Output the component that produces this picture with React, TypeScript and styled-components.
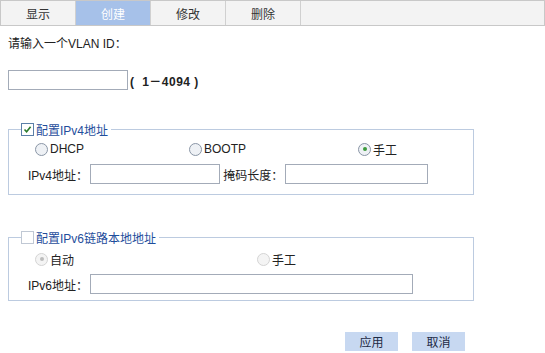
import React, { useState } from "react";
import styled, { createGlobalStyle } from "styled-components";

const GlobalStyle = createGlobalStyle`
  body {
    margin: 0;
    background: #ffffff;
    font-family: "Liberation Sans", "Noto Sans CJK SC", sans-serif;
    font-size: 12px;
    color: #222;
  }
`;

const Page = styled.div`
  width: 545px;
  height: 353px;
  overflow: hidden;
`;

const TabBar = styled.div`
  display: flex;
  height: 24px;
  border: 1px solid #c8c8c8;
  background: #f3f3f3;
`;

const Tab = styled.div<{ $active?: boolean }>`
  width: 74px;
  display: flex;
  align-items: center;
  justify-content: center;
  border-right: 1px solid #d0d0d0;
  background: ${(p) => (p.$active ? "#a6c1e9" : "transparent")};
  color: ${(p) => (p.$active ? "#ffffff" : "#333")};
`;

const Content = styled.div`
  padding: 11px 8px 0 8px;
`;

const Prompt = styled.div`
  height: 14px;
  line-height: 14px;
`;

const IdRow = styled.div`
  display: flex;
  align-items: center;
  margin-top: 19px;
  gap: 2px;
`;

const TextBox = styled.input<{ $w: number }>`
  width: ${(p) => p.$w}px;
  height: 20px;
  box-sizing: border-box;
  border: 1px solid #a3abb8;
  padding: 0 3px;
  font: inherit;
`;

const Range = styled.span`
  font-weight: bold;
  color: #222;
  letter-spacing: 0.5px;
`;

const Group = styled.fieldset<{ $top: number; $h: number }>`
  margin: ${(p) => p.$top}px 0 0 0;
  width: 466px;
  height: ${(p) => p.$h}px;
  box-sizing: border-box;
  border: 1px solid #bccbe0;
  padding: 0 0 0 26px;
`;

const Legend = styled.legend`
  padding: 0 3px 0 0;
  margin-left: -14px;
  display: flex;
  align-items: center;
  gap: 2px;
  color: #1f4e9c;
`;

const Box = styled.span<{ $on?: boolean }>`
  width: 11px;
  height: 11px;
  border: 1px solid ${(p) => (p.$on ? "#5b7fa8" : "#c0c8d4")};
  background: #fff;
  display: inline-flex;
  align-items: center;
  justify-content: center;
`;

const RadioRow = styled.div<{ $gap?: number }>`
  display: flex;
  height: 18px;
  align-items: center;
  margin-top: ${(p) => p.$gap ?? 2}px;
`;

const RadioItem = styled.label<{ $w: number }>`
  width: ${(p) => p.$w}px;
  display: flex;
  align-items: center;
  gap: 2px;
  color: #222;
`;

const Dot = styled.span<{ $on?: boolean; $off?: boolean }>`
  width: 11px;
  height: 11px;
  border-radius: 50%;
  border: 1px solid ${(p) => (p.$off ? "#d4d4d4" : "#8a96a6")};
  background: ${(p) => (p.$off ? "#f4f4f4" : "#eef1f5")};
  display: inline-flex;
  align-items: center;
  justify-content: center;
  &::after {
    content: "";
    width: 4px;
    height: 4px;
    border-radius: 50%;
    background: ${(p) => (p.$off ? "#bcbcbc" : "#3b9a3b")};
    display: ${(p) => (p.$on ? "block" : "none")};
  }
`;

const FieldRow = styled.div`
  display: flex;
  align-items: center;
  margin-top: 6px;
  margin-left: -7px;
`;

const Label = styled.span<{ $w: number }>`
  width: ${(p) => p.$w}px;
`;

const Actions = styled.div`
  display: flex;
  gap: 14px;
  margin: 31px 0 0 337px;
`;

const Button = styled.button`
  width: 53px;
  height: 19px;
  border: none;
  background: #c7d8f1;
  color: #1d2a44;
  font: inherit;
  padding: 0;
`;

const Check = () => (
  <svg width="9" height="9" viewBox="0 0 9 9">
    <path d="M1.5 4.5 L3.6 6.8 L7.6 1.8" stroke="#2a7a2a" strokeWidth="1.6" fill="none" />
  </svg>
);

export default function App() {
  const [mode] = useState("manual");
  return (
    <Page>
      <GlobalStyle />
      <TabBar>
        <Tab>显示</Tab>
        <Tab $active>创建</Tab>
        <Tab>修改</Tab>
        <Tab>删除</Tab>
      </TabBar>
      <Content>
        <Prompt>请输入一个VLAN ID：</Prompt>
        <IdRow>
          <TextBox $w={120} />
          <Range>(&nbsp; 1－4094 )</Range>
        </IdRow>
        <Group $top={31} $h={74}>
          <Legend>
            <Box $on>
              <Check />
            </Box>
            配置IPv4地址
          </Legend>
          <RadioRow>
            <RadioItem $w={154}>
              <Dot $on={mode === "dhcp"} />
              DHCP
            </RadioItem>
            <RadioItem $w={169}>
              <Dot $on={mode === "bootp"} />
              BOOTP
            </RadioItem>
            <RadioItem $w={60}>
              <Dot $on={mode === "manual"} />
              手工
            </RadioItem>
          </RadioRow>
          <FieldRow>
            <Label $w={62}>IPv4地址：</Label>
            <TextBox $w={130} />
            <Label $w={65}>&nbsp;掩码长度：</Label>
            <TextBox $w={143} />
          </FieldRow>
        </Group>
        <Group $top={34} $h={72}>
          <Legend>
            <Box />
            配置IPv6链路本地地址
          </Legend>
          <RadioRow $gap={4}>
            <RadioItem $w={222}>
              <Dot $on $off />
              自动
            </RadioItem>
            <RadioItem $w={60}>
              <Dot $off />
              手工
            </RadioItem>
          </RadioRow>
          <FieldRow>
            <Label $w={62}>IPv6地址：</Label>
            <TextBox $w={323} />
          </FieldRow>
        </Group>
        <Actions>
          <Button>应用</Button>
          <Button>取消</Button>
        </Actions>
      </Content>
    </Page>
  );
}
